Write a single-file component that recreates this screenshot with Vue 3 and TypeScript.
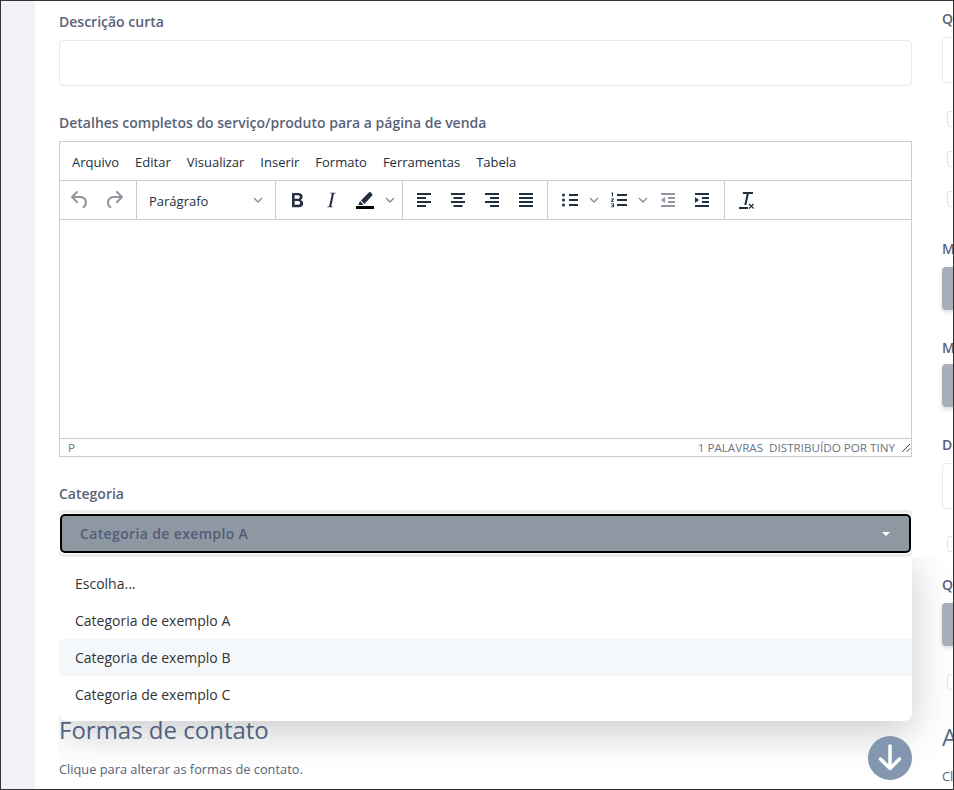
<script setup lang="ts">
const menus = ['Arquivo', 'Editar', 'Visualizar', 'Inserir', 'Formato', 'Ferramentas', 'Tabela']
const options = ['Escolha...', 'Categoria de exemplo A', 'Categoria de exemplo B', 'Categoria de exemplo C']
</script>

<template>
  <div class="frame">
    <div class="gutter"></div>
    <div class="card">
      <main class="main">
        <label class="label first">Descrição curta</label>
        <div class="input"></div>
        <label class="label second">Detalhes completos do serviço/produto para a página de venda</label>
        <div class="editor">
          <div class="menubar">
            <span v-for="m in menus" :key="m">{{ m }}</span>
          </div>
          <div class="toolbar">
            <div class="group g-history">
              <button class="tool"><svg viewBox="0 0 24 24" class="muted"><path d="M6.4 8H12c3.7 0 6.2 2 6.8 5.1.6 2.7-.4 5.6-2.8 6.9a1 1 0 0 1-1-1.8c1.6-.9 2.2-3 1.8-4.7-.4-2.1-2.2-3.5-4.8-3.5H6.4l3.3 3.3a1 1 0 1 1-1.4 1.4l-5-5a1 1 0 0 1 0-1.4l5-5a1 1 0 0 1 1.4 1.4L6.4 8z"/></svg></button>
              <button class="tool"><svg viewBox="0 0 24 24" class="muted"><path d="M17.6 10H12c-2.8 0-4.4 1.4-4.9 3.5-.4 1.7.2 3.8 1.8 4.7a1 1 0 1 1-1 1.8c-2.4-1.3-3.4-4.2-2.8-6.9C5.8 10 8.3 8 12 8h5.6l-3.3-3.3a1 1 0 1 1 1.4-1.4l5 5a1 1 0 0 1 0 1.4l-5 5a1 1 0 1 1-1.4-1.4l3.3-3.3z"/></svg></button>
            </div>
            <div class="group g-format">
              <span class="format-text">Parágrafo</span>
              <svg class="chev" viewBox="0 0 10 10"><path d="M1 3l4 4 4-4"/></svg>
            </div>
            <div class="group g-style">
              <button class="tool"><svg viewBox="0 0 24 24"><path d="M7.8 19c-.3 0-.5 0-.6-.2l-.2-.5V5.700c0-.2 0-.4.2-.5l.6-.2h5c1.500 0 2.700.3 3.500 1 .9.600 1.300 1.600 1.300 2.800 0 .7-.2 1.400-.6 2-.4.6-1 1-1.600 1.200.9.2 1.500.6 2 1.200.5.6.7 1.400.7 2.200 0 1.300-.4 2.200-1.300 2.900-.8.7-2 1-3.500 1H7.800zm5-8.300c.6 0 1.100-.1 1.500-.5.3-.3.5-.7.5-1.300 0-.5-.2-.9-.5-1.200-.4-.3-.9-.4-1.500-.4H9.600v3.400h3.200zm.2 6c.7 0 1.200-.1 1.600-.5.4-.3.6-.8.6-1.400s-.2-1-.6-1.400c-.4-.3-.9-.5-1.600-.5H9.600v3.800H13z"/></svg></button>
              <button class="tool"><svg viewBox="0 0 24 24"><path d="M16.700 4.700l-.1.9h-1.600l-2.800 12.800h1.500l-.2.9H8.300l.2-.9h1.600l2.800-12.800h-1.600l.2-.9h5.200z"/></svg></button>
              <button class="tool"><svg viewBox="0 0 24 24"><path d="M3 18h18v3H3z" fill="#000"/><path d="M6 16l-1.200 1h4.600l.9-.8-3-3-1.300 1.600zM8 12.500l3.500 3.500 7.700-8.600c.4-.4.4-1 0-1.400l-1.700-1.700c-.4-.4-1-.4-1.400 0L8 12.500z"/></svg></button>
              <svg class="chev c-after" viewBox="0 0 10 10"><path d="M1 3l4 4 4-4"/></svg>
            </div>
            <div class="group g-align">
              <button class="tool"><svg viewBox="0 0 24 24"><path d="M5 5h14v2H5zM5 9h9v2H5zM5 13h14v2H5zM5 17h9v2H5z"/></svg></button>
              <button class="tool"><svg viewBox="0 0 24 24"><path d="M5 5h14v2H5zM7.500 9h9v2h-9zM5 13h14v2H5zM7.500 17h9v2h-9z"/></svg></button>
              <button class="tool"><svg viewBox="0 0 24 24"><path d="M5 5h14v2H5zM10 9h9v2h-9zM5 13h14v2H5zM10 17h9v2h-9z"/></svg></button>
              <button class="tool"><svg viewBox="0 0 24 24"><path d="M5 5h14v2H5zM5 9h14v2H5zM5 13h14v2H5zM5 17h14v2H5z"/></svg></button>
            </div>
            <div class="group g-lists">
              <button class="tool"><svg viewBox="0 0 24 24"><path d="M11 6h9v2h-9zM11 11h9v2h-9zM11 16h9v2h-9z"/><circle cx="5.500" cy="7" r="1.500"/><circle cx="5.500" cy="12" r="1.500"/><circle cx="5.500" cy="17" r="1.500"/></svg></button>
              <svg class="chev c-list" viewBox="0 0 10 10"><path d="M1 3l4 4 4-4"/></svg>
              <button class="tool after-chev"><svg viewBox="0 0 24 24"><path d="M10 6h10v2H10zM10 11h10v2H10zM10 16h10v2H10z"/><path d="M4.500 4.500h1.500v4h-1v-3h-.5zM4 10.500h3v.8l-1.800 1.700H7v.8H4v-.8l1.800-1.700H4zM4 15.500h3v3.800H4v-.8h2v-.7H4.800v-.8H6v-.7H4z"/></svg></button>
              <svg class="chev c-list" viewBox="0 0 10 10"><path d="M1 3l4 4 4-4"/></svg>
              <button class="tool after-chev"><svg viewBox="0 0 24 24" class="muted"><path d="M5 5h14v2H5zM12 9h7v2h-7zM12 13h7v2h-7zM5 17h14v2H5zM9 9v6l-4-3z"/></svg></button>
              <button class="tool"><svg viewBox="0 0 24 24"><path d="M5 5h14v2H5zM12 9h7v2h-7zM12 13h7v2h-7zM5 17h14v2H5zM5 9v6l4-3z"/></svg></button>
            </div>
            <div class="group g-clear">
              <button class="tool"><svg viewBox="0 0 24 24"><path d="M9 4h10v2h-4.200l-2.400 11h-2.100l2.400-11H8.600zM5 19h9v2H5zM15.500 15.500l1.800 1.800 1.800-1.800.9.900-1.800 1.800 1.800 1.800-.9.900-1.800-1.800-1.800 1.800-.9-.9 1.800-1.800-1.800-1.800z"/></svg></button>
            </div>
          </div>
          <div class="edit-area"></div>
          <div class="statusbar">
            <span class="path">P</span>
            <span class="words">1 PALAVRAS</span>
            <span class="brand">DISTRIBUÍDO POR TINY</span>
            <svg class="grip" viewBox="0 0 10 10"><path d="M9 1L1 9M9 5.500L5.500 9"/></svg>
          </div>
        </div>
        <label class="label third">Categoria</label>
        <div class="select-wrap">
          <div class="select">
            <span>Categoria de exemplo A</span>
            <i class="caret"></i>
          </div>
          <ul class="dropdown">
            <li v-for="o in options" :key="o" :class="{ hover: o.endsWith('B') }">{{ o }}</li>
          </ul>
        </div>
        <h2 class="heading">Formas de contato</h2>
        <p class="hint">Clique para alterar as formas de contato.</p>
      </main>
      <aside class="side">
        <label class="label s1">Q</label>
        <div class="input s-input"></div>
        <div class="check c1"></div>
        <div class="check c2"></div>
        <div class="check c2"></div>
        <label class="label s2">M</label>
        <div class="btn b1"></div>
        <label class="label s3">M</label>
        <div class="btn b2"></div>
        <label class="label s4">Da</label>
        <div class="input s-input"></div>
        <div class="check c3"></div>
        <label class="label s5">Q</label>
        <div class="btn s5-btn"></div>
        <div class="check c4"></div>
        <h2 class="heading s-heading">A</h2>
        <p class="hint s-hint">Cl</p>
      </aside>
      <button class="scroll-down" aria-label="Descer">
        <svg viewBox="0 0 44 44"><path d="M22 10v22M12.500 23l9.500 9.500 9.500-9.500"/></svg>
      </button>
    </div>
  </div>
</template>

<style>
html, body { margin: 0; padding: 0; }
</style>

<style scoped>
* { box-sizing: border-box; }
.frame {
  width: 954px; height: 790px; display: flex; overflow: hidden;
  border: 1px solid #333; background: #fff;
  font-family: "Open Sans", "Noto Sans", sans-serif;
}
.gutter { width: 34px; flex: none; background: #f0f2f8; }
.card { position: relative; flex: 1; display: flex; gap: 30px; padding-left: 24px; min-width: 0; overflow: hidden; }
.main { width: 853px; flex: none; }
.side { flex: none; width: 60px; }
.label { display: block; font-size: 14px; font-weight: 600; line-height: 20px; color: #596379; }
.first { margin-top: 11px; }
.input { height: 46px; border: 1px solid #e8e9ed; border-radius: 4px; background: #fff; margin-top: 8px; }
.second { margin-top: 27px; }
.editor { margin-top: 8px; height: 316px; border: 1px solid #ccc; display: flex; flex-direction: column; }
.menubar { height: 39px; display: flex; align-items: center; gap: 16px; padding: 2px 12px 0; font-size: 13px; color: #222f3e; border-bottom: 1px solid #ccc; flex: none; }
.toolbar { height: 39px; flex: none; display: flex; border-bottom: 1px solid #ccc; }
.group { display: flex; align-items: center; border-right: 1px solid #ccc; height: 100%; flex: none; }
.group:last-child { border-right: 0; }
.tool { width: 34px; height: 30px; flex: none; border: 0; padding: 0; background: none; display: flex; align-items: center; justify-content: center; }
.tool svg { width: 24px; height: 24px; fill: #222f3e; }
.tool svg.muted { opacity: .5; }
.chev { width: 10px; height: 10px; fill: none; stroke: #222f3e; stroke-opacity: .55; stroke-width: 1.4; flex: none; }
.c-after { margin-left: 3px; }
.c-list { margin-left: 2px; }
.after-chev { margin-left: 3px; }
.g-history { width: 77px; padding: 0 3px; }
.g-format { width: 139px; padding: 0 12px; justify-content: space-between; }
.format-text { font-size: 13px; color: #222f3e; padding-top: 1px; }
.g-style { width: 127px; padding: 0 4px; }
.g-align { width: 145px; padding: 0 0 0 4px; }
.g-lists { width: 177px; padding: 0 0 0 5px; }
.g-clear { padding: 0 4px; }
.edit-area { flex: 1; }
.statusbar { height: 18px; flex: none; border-top: 1px solid #ccc; display: flex; align-items: center; padding: 0 0 0 8px; font-size: 11.65px; color: #6b7480; }
.path { flex: 1; }
.words { margin-right: 6px; }
.grip { width: 10px; height: 10px; margin-left: 6px; fill: none; stroke: #444; stroke-width: 1; }
.third { margin-top: 27px; }
.select-wrap { position: relative; margin-top: 11px; height: 43px; }
.select {
  position: absolute; left: 3px; right: 3px; top: 1px; height: 35px;
  display: flex; align-items: center; justify-content: space-between; padding: 0 19px 0 18px;
  background: #8e98a3; border-radius: 3px; font-size: 14px; font-weight: 600; letter-spacing: .36px; color: #535d78;
  box-shadow: 0 0 0 2px #000, 0 0 0 3px #fff, 0 0 0 6px #e9ebee;
  clip-path: inset(-6px -3px -6px -3px);
}
.caret { width: 0; height: 0; border: 4px solid transparent; border-top-color: #fff; border-bottom: 0; }
.dropdown {
  position: absolute; left: 0; right: 0; top: 42px; margin: 0; padding: 8px 0; list-style: none;
  background: #fff; border-radius: 0 0 8px 8px; z-index: 2;
  box-shadow: 0 10px 40px rgba(40, 40, 60, .25);
  clip-path: inset(0 -60px -80px 0);
}
.dropdown li { height: 37px; padding: 0 16px; display: flex; align-items: center; font-size: 14px; color: #333; }
.dropdown li.hover { background: #f5f8fb; }
.heading { margin: 0; font-size: 24px; font-weight: 400; line-height: 32px; color: #566a88; }
.main .heading { margin-top: 156px; }
.hint { margin: 14px 0 0; font-size: 12.8px; line-height: 18px; color: #596379; }
.s1 { margin-top: 8px; }
.s-input { height: 46px; }
.check { width: 16px; height: 16px; margin-left: 5px; border: 1px solid #e0e2e7; border-radius: 3px; }
.c1 { margin-top: 28px; }
.c2 { margin-top: 24px; }
.s2 { margin-top: 32px; }
.btn { height: 43px; background: #a9afba; border-radius: 4px; box-shadow: 0 2px 4px rgba(0,0,0,.15); }
.b1 { margin-top: 8px; }
.b2 { margin-top: 6px; }
.s3 { margin-top: 28px; }
.s4 { margin-top: 28px; }
.c3 { margin-top: 27px; }
.s5 { margin-top: 23px; }
.s5-btn { margin-top: 8px; }
.c4 { margin-top: 28px; }
.s-heading { margin-top: 31px; }
.s-hint { margin-top: 14px; }
.scroll-down {
  position: absolute; right: 41px; bottom: 9px; width: 44px; height: 44px; z-index: 3;
  border: 0; padding: 0; border-radius: 50%; background: #8497b0;
}
.scroll-down svg { width: 44px; height: 44px; display: block; fill: none; stroke: #fff; stroke-width: 3.5; stroke-linecap: round; stroke-linejoin: round; }
</style>
